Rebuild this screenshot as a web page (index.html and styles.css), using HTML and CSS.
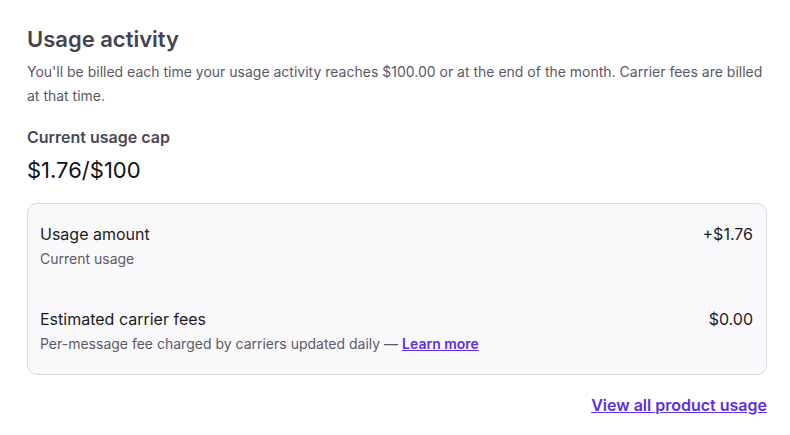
FILE: index.html
```html
<!DOCTYPE html>
<html lang="en">
<head>
  <meta charset="UTF-8" />
  <meta name="viewport" content="width=device-width, initial-scale=1" />
  <title>Usage activity</title>
  <link rel="stylesheet" href="styles.css">
</head>
<body>
  <section class="usage">
    <h2 class="usage-title">Usage activity</h2>
    <p class="usage-desc">You'll be billed each time your usage activity reaches $100.00 or at the end of the month. Carrier fees are billed at that time.</p>

    <h3 class="cap-label">Current usage cap</h3>
    <div class="cap-value">$1.76/$100</div>

    <div class="usage-card">
      <div class="usage-row">
        <div class="row-text">
          <div class="row-title">Usage amount</div>
          <div class="row-sub">Current usage</div>
        </div>
        <div class="row-amount">+$1.76</div>
      </div>
      <div class="usage-row">
        <div class="row-text">
          <div class="row-title">Estimated carrier fees</div>
          <div class="row-sub">Per-message fee charged by carriers updated daily — <a href="#" class="link">Learn more</a></div>
        </div>
        <div class="row-amount">$0.00</div>
      </div>
    </div>

    <div class="usage-footer">
      <a href="#" class="link link-lg">View all product usage</a>
    </div>
  </section>
</body>
</html>
```

FILE: styles.css
```css
body {
  margin: 0;
  font-family: Inter, "Noto Sans", sans-serif;
  background: #fff;
  color: #121118;
}
.usage {
  padding: 25px 23px 0 27px;
}
.usage-title {
  margin: 0;
  font-size: 22px;
  line-height: 28px;
  font-weight: 600;
  color: #45434f;
}
.usage-desc {
  margin: 7px 0 0;
  font-size: 14px;
  line-height: 24px;
  color: #5b5966;
}
.cap-label {
  margin: 19px 0 0;
  font-size: 16px;
  line-height: 20px;
  font-weight: 600;
  color: #4a4854;
}
.cap-value {
  margin-top: 9px;
  font-size: 22px;
  line-height: 28px;
  color: #121118;
}
.usage-card {
  margin-top: 19px;
  padding: 18px 13px 20px 12px;
  background: #f9f9fc;
  border: 1px solid #d9d7e3;
  border-radius: 10px;
  display: flex;
  flex-direction: column;
  gap: 38px;
}
.usage-row {
  display: flex;
  justify-content: space-between;
  align-items: flex-start;
}
.row-title,
.row-amount {
  font-size: 16px;
  line-height: 24px;
  color: #1c1b22;
}
.row-sub {
  margin-top: 3px;
  font-size: 14px;
  line-height: 20px;
  color: #5b5966;
}
.link {
  color: #5b2ee6;
  font-weight: 600;
  text-decoration: underline;
}
.usage-footer {
  margin-top: 18px;
  display: flex;
  justify-content: flex-end;
}
.link-lg {
  font-size: 16px;
  line-height: 24px;
}
```
